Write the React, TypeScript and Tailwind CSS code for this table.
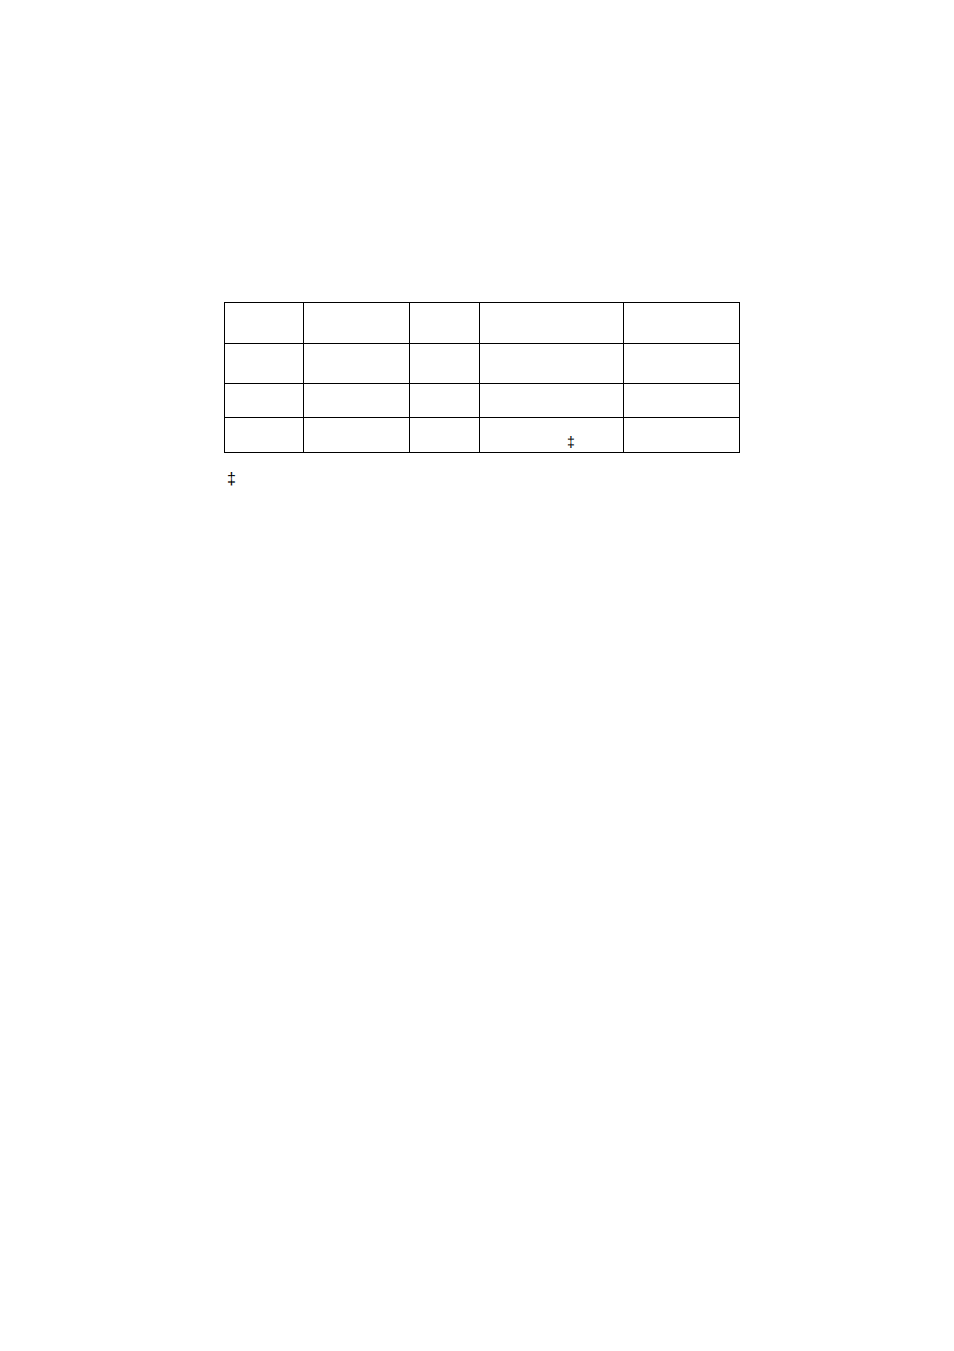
const colWidths = "grid-cols-[79px_106px_70px_144px_116px]";

// row heights in px, measured from the page
const rows = ["h-[41px]", "h-[40px]", "h-[34px]", "h-[35px]"];

export default function App() {
  return (
    <div className="min-h-[1351px] w-[954px] bg-white pt-[302px] pl-[224px] font-['Liberation_Sans',sans-serif] text-black antialiased">
      <div className={`grid w-[516px] border-r border-b border-black ${colWidths}`}>
        {rows.map((h, r) =>
          [0, 1, 2, 3, 4].map((c) => (
            <div key={`${r}-${c}`} className={`${h} border-l border-t border-black flex items-end`}>
              {r === 3 && c === 3 ? (
                <span className="pl-[87px] pb-[2px] text-[14px] leading-[16px]">‡</span>
              ) : null}
            </div>
          ))
        )}
      </div>
      <div className="pt-[17px] pl-[3px] text-[16px] leading-[18px]">‡</div>
    </div>
  );
}
